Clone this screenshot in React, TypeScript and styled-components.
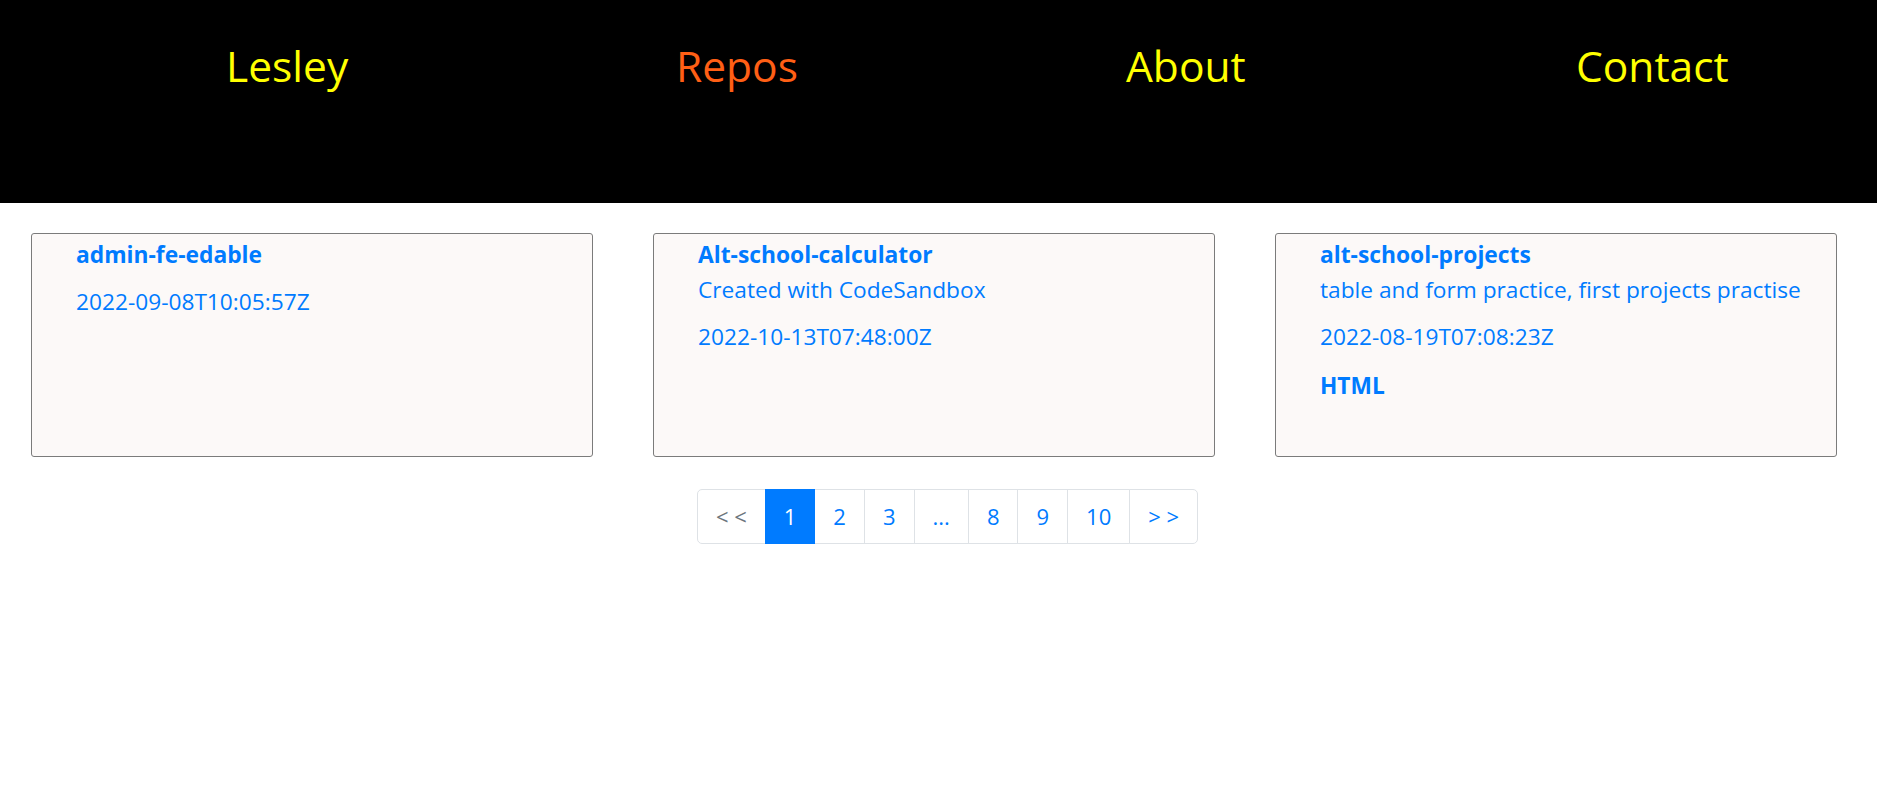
import React from "react";
import styled, { createGlobalStyle } from "styled-components";

const GlobalStyle = createGlobalStyle`
  html, body {
    margin: 0;
    padding: 0;
    background: #ffffff;
    font-family: "Open Sans", "Noto Sans", sans-serif;
  }
  * { box-sizing: border-box; }
`;

const Header = styled.header`
  height: 203px;
  background: #000000;
  padding: 40px 0 0 226px;
`;

const NavList = styled.ul`
  list-style: none;
  margin: 0;
  padding: 0;
  display: grid;
  grid-template-columns: 450px 450px 450px auto;
`;

const NavLink = styled.a<{ $active?: boolean }>`
  font-family: "Open Sans", sans-serif;
  font-size: 42.5px;
  line-height: 1.2;
  color: ${(p) => (p.$active ? "#ff5f15" : "#ffff00")};
  text-decoration: none;
`;

const CardGrid = styled.section`
  display: grid;
  grid-template-columns: repeat(3, 562px);
  column-gap: 60px;
  padding: 30px 0 0 31px;
`;

const Card = styled.article`
  height: 224px;
  border: 1px solid #7b7b7b;
  border-radius: 3px;
  background: #fcf9f8;
  padding: 6px 16px 0 44px;
  display: flex;
  flex-direction: column;
  color: #007bff;
  font-size: 22.7px;
  line-height: 30px;
`;

const Title = styled.h3`
  margin: 0;
  font-size: 22.8px;
  font-weight: 700;
  line-height: 30px;
`;

const Desc = styled.p`
  margin: 5px 0 0;
`;

const DateLine = styled.p`
  margin: 17px 0 0;
`;

const Lang = styled.p`
  margin: 19px 0 0;
  font-weight: 700;
`;

const PagerWrap = styled.nav`
  display: flex;
  justify-content: center;
  padding: 32px 0 0 18px;
`;

const PagerList = styled.ul`
  list-style: none;
  margin: 0;
  padding: 0;
  display: flex;
`;

const PageItem = styled.li<{ $active?: boolean; $muted?: boolean }>`
  margin-left: -1px;
  padding: 10px 18px;
  font-size: 22px;
  line-height: 33px;
  border: 1px solid ${(p) => (p.$active ? "#007bff" : "#dee2e6")};
  background: ${(p) => (p.$active ? "#007bff" : "#ffffff")};
  color: ${(p) => (p.$active ? "#ffffff" : p.$muted ? "#6c757d" : "#007bff")};
  position: relative;
  z-index: ${(p) => (p.$active ? 1 : 0)};

  &:first-child {
    margin-left: 0;
    border-radius: 5px 0 0 5px;
  }
  &:last-child {
    border-radius: 0 5px 5px 0;
  }
`;

type Repo = {
  name: string;
  description?: string;
  date: string;
  language?: string;
};

const repos: Repo[] = [
  { name: "admin-fe-edable", date: "2022-09-08T10:05:57Z" },
  {
    name: "Alt-school-calculator",
    description: "Created with CodeSandbox",
    date: "2022-10-13T07:48:00Z",
  },
  {
    name: "alt-school-projects",
    description: "table and form practice, first projects practise",
    date: "2022-08-19T07:08:23Z",
    language: "HTML",
  },
];

const navItems = [
  { label: "Lesley", active: false },
  { label: "Repos", active: true },
  { label: "About", active: false },
  { label: "Contact", active: false },
];

const pages = [
  { label: "< <", muted: true },
  { label: "1", active: true },
  { label: "2" },
  { label: "3" },
  { label: "..." },
  { label: "8" },
  { label: "9" },
  { label: "10" },
  { label: "> >" },
];

export default function App() {
  return (
    <>
      <GlobalStyle />
      <Header>
        <NavList>
          {navItems.map((n) => (
            <li key={n.label}>
              <NavLink href="#" $active={n.active}>
                {n.label}
              </NavLink>
            </li>
          ))}
        </NavList>
      </Header>
      <CardGrid>
        {repos.map((r) => (
          <Card key={r.name}>
            <Title>{r.name}</Title>
            {r.description && <Desc>{r.description}</Desc>}
            <DateLine>{r.date}</DateLine>
            {r.language && <Lang>{r.language}</Lang>}
          </Card>
        ))}
      </CardGrid>
      <PagerWrap>
        <PagerList>
          {pages.map((p) => (
            <PageItem key={p.label} $active={p.active} $muted={p.muted}>
              {p.label}
            </PageItem>
          ))}
        </PagerList>
      </PagerWrap>
    </>
  );
}
